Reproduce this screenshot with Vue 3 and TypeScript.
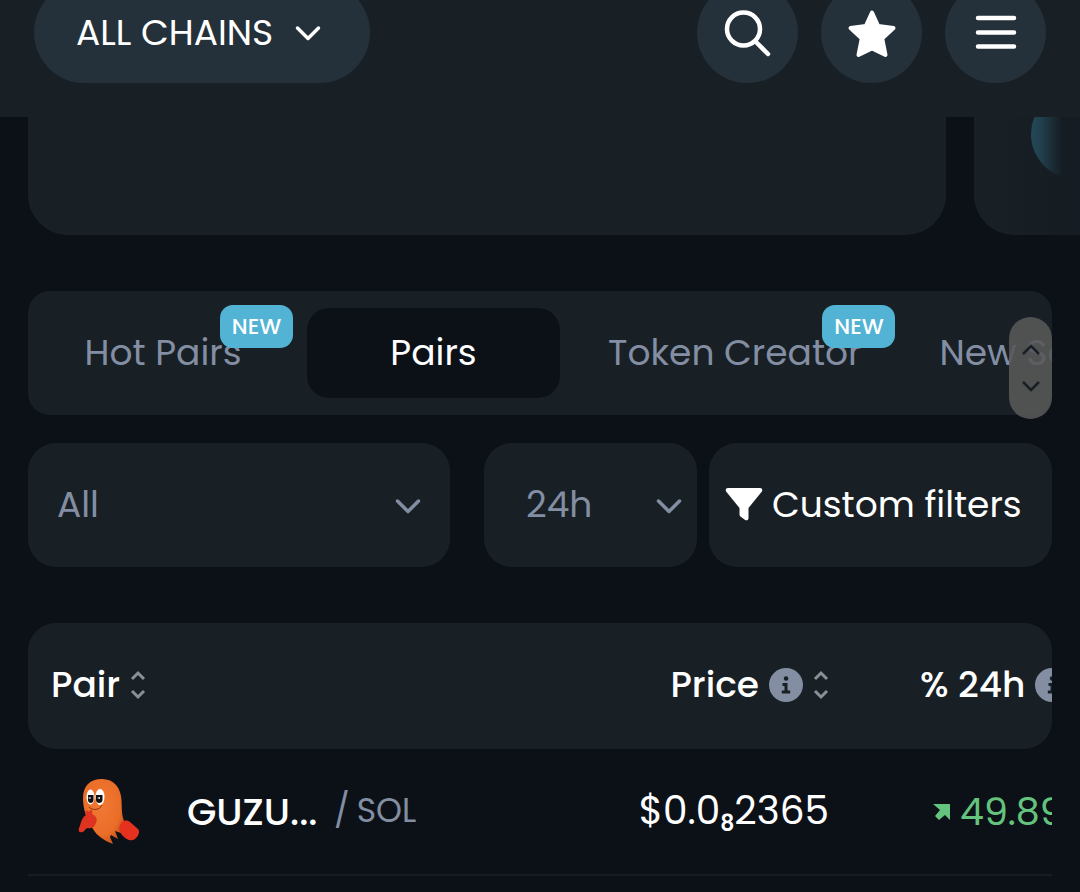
<script setup lang="ts">
import { ref } from 'vue'

interface Tab {
  id: string
  label: string
  isNew: boolean
}

const tabs: Tab[] = [
  { id: 'hot', label: 'Hot Pairs', isNew: true },
  { id: 'pairs', label: 'Pairs', isNew: false },
  { id: 'creator', label: 'Token Creator', isNew: true },
  { id: 'socials', label: 'New Socials', isNew: false },
]

const activeTab = ref('pairs')
const category = ref('All')
const period = ref('24h')
</script>

<template>
  <div class="page">
    <header class="topbar">
      <button class="chains" type="button">
        <span>ALL CHAINS</span>
        <svg class="chevron" viewBox="0 0 28 18" aria-hidden="true"><path d="M3.500 4 14 14.500 24.500 4" /></svg>
      </button>
      <nav class="actions">
        <button class="round" type="button" aria-label="Search">
          <svg viewBox="0 0 50 50" fill="none" stroke="currentColor" stroke-width="4.500" stroke-linecap="round" aria-hidden="true">
            <circle cx="20.500" cy="21" r="16.500" />
            <path d="m33 34 12 12" />
          </svg>
        </button>
        <button class="round" type="button" aria-label="Favourites">
          <svg viewBox="0 0 50 50" fill="currentColor" stroke="currentColor" stroke-width="4" stroke-linejoin="round" aria-hidden="true">
            <path d="m25 4.500 6.200 13.500 15.300 2-11.300 10.500 3.300 16.500L25 40.500 11.500 47l3.300-16.500L3.500 20l15.300-2Z" />
          </svg>
        </button>
        <button class="round" type="button" aria-label="Menu">
          <svg viewBox="0 0 50 50" fill="none" stroke="currentColor" stroke-width="4.500" stroke-linecap="round" aria-hidden="true">
            <path d="M7 10h36M7 24.500h36M7 38.500h36" />
          </svg>
        </button>
      </nav>
    </header>

    <main>
      <section class="carousel" aria-label="Highlights">
        <div class="slide"></div>
        <div class="slide next"><span class="orb"></span></div>
      </section>

      <div class="tabs-wrap">
        <div class="tabs" role="tablist">
          <button
            v-for="tab in tabs"
            :key="tab.id"
            type="button"
            role="tab"
            :class="['tab', tab.id, { active: activeTab === tab.id }]"
            :aria-selected="activeTab === tab.id"
            @click="activeTab = tab.id"
          >
            {{ tab.label }}
            <span v-if="tab.isNew" class="badge">NEW</span>
          </button>
        </div>
        <div class="scroller" aria-hidden="true">
          <svg viewBox="0 0 20 12"><path d="m2 10 8-8 8 8" /></svg>
          <svg viewBox="0 0 20 12"><path d="m2 2 8 8 8-8" /></svg>
        </div>
      </div>

      <form class="filters" @submit.prevent>
        <label class="field wide">
          <select v-model="category" aria-label="Category">
            <option>All</option>
          </select>
          <svg class="chevron" viewBox="0 0 28 18" aria-hidden="true"><path d="M3.500 4 14 14.500 24.500 4" /></svg>
        </label>
        <div class="filter-pair">
          <label class="field period">
            <select v-model="period" aria-label="Period">
              <option>24h</option>
            </select>
            <svg class="chevron" viewBox="0 0 28 18" aria-hidden="true"><path d="M3.500 4 14 14.500 24.500 4" /></svg>
          </label>
          <button class="custom" type="button">
            <svg viewBox="0 0 38 34" aria-hidden="true">
              <path d="M3 0h32c2 0 3 2 1.700 3.800L23.500 20v10c0 2.200-2 3-3.700 1.700l-4-3c-.9-.7-1.300-1.400-1.300-2.500V20L1.300 3.800C0 2 1 0 3 0Z" fill="currentColor" />
            </svg>
            <span>Custom filters</span>
          </button>
        </div>
      </form>

      <table>
        <colgroup>
          <col />
          <col class="col-price" />
          <col class="col-change" />
        </colgroup>
        <thead>
          <tr>
            <th class="pair" scope="col">
              <button class="sort" type="button">
                Pair
                <svg class="arrows" viewBox="0 0 16 30" aria-hidden="true"><path d="m2 9 6-6 6 6M2 21l6 6 6-6" /></svg>
              </button>
            </th>
            <th class="price" scope="col">
              <button class="sort" type="button">
                Price
                <svg class="info" viewBox="0 0 34 34" aria-hidden="true">
                  <circle cx="17" cy="17" r="17" fill="#838ea3" />
                  <path d="M17 10.500h.1" stroke="#182026" stroke-width="4.500" stroke-linecap="round" />
                  <path d="M13.500 16.500H17v7M12.800 24h8.400" fill="none" stroke="#182026" stroke-width="3" />
                </svg>
                <svg class="arrows" viewBox="0 0 16 30" aria-hidden="true"><path d="m2 9 6-6 6 6M2 21l6 6 6-6" /></svg>
              </button>
            </th>
            <th class="change" scope="col">
              <button class="sort" type="button">
                % 24h
                <svg class="info" viewBox="0 0 34 34" aria-hidden="true">
                  <circle cx="17" cy="17" r="17" fill="#838ea3" />
                  <path d="M17 10.500h.1" stroke="#182026" stroke-width="4.500" stroke-linecap="round" />
                  <path d="M13.500 16.500H17v7M12.800 24h8.400" fill="none" stroke="#182026" stroke-width="3" />
                </svg>
              </button>
            </th>
          </tr>
        </thead>
        <tbody>
          <tr>
            <td class="pair">
              <a class="token" href="#">
                <svg class="ghost" viewBox="2 5 64 70" aria-hidden="true">
                  <defs>
                    <radialGradient id="ghost-body" cx=".45" cy=".4" r=".65">
                      <stop offset="0" stop-color="#f07a34" />
                      <stop offset=".7" stop-color="#ea6d28" />
                      <stop offset="1" stop-color="#c9541c" />
                    </radialGradient>
                  </defs>
                  <path d="M8 26C8 14 15 7 27 7c12 0 19 9 19.500 21 .4 8 0 14 2.500 21-2 3-3 6-3 12l-6-2 3 8-7-4-1 2 3 7C30 69 22 64 18 57 11 47 8 36 8 26Z" fill="url(#ghost-body)" />
                  <path d="M46 51c2-3 6-3 9-1l8 7c3 3-1 10-5 11-4 1-7-1-10-4-4-4-5-9-2-13Z" fill="#e6311f" />
                  <ellipse cx="15.500" cy="25" rx="4" ry="7.500" fill="#fff" />
                  <ellipse cx="25" cy="25" rx="4.500" ry="8" fill="#fff" />
                  <path d="M13 23h5.500v5c0 4-5.500 4-5.500 0ZM21 23h6.500v5c0 4-6.500 4-6.500 0Z" fill="#111" />
                  <path d="m13 26 2.500-1v2ZM22 26l3-1v2Z" fill="#fff" />
                  <path d="M14 35c4 4 11 3 13-2" fill="none" stroke="#8d3212" />
                  <path d="M11 43c-2-4 1-6 3-3 2-4 4-2 3 2 4 2 6 5 4 9-2 5-6 6-9 5l-4 4c-4 1-5-1-4-4 2-4 2-10 7-13Z" fill="#dd3320" />
                </svg>
                <span class="symbol">GUZU...</span>
                <span class="slash">/</span>
                <span class="quote">SOL</span>
              </a>
            </td>
            <td class="price">$0.0<sub>8</sub>2365</td>
            <td class="change">
              <span class="gain">
                <svg viewBox="0 0 18 18" aria-hidden="true"><path d="M0 1h17v16l-5-5-6 5-4-4 5-6Z" fill="currentColor" /></svg>
                49.89%
              </span>
            </td>
          </tr>
        </tbody>
      </table>
    </main>
  </div>
</template>

<style>
body {
  margin: 0;
  background: #0c1118;
}
</style>

<style scoped>
.page {
  overflow: hidden;
  padding-bottom: 15px;
  background: #0c1118;
  color: #fff;
  font-family: Poppins, Inter, "Noto Sans", sans-serif;
  font-size: 36px;
  line-height: 44px;
}
*,
*::before,
*::after {
  box-sizing: border-box;
}
button,
select {
  margin: 0;
  border: 0;
  padding: 0;
  background: none;
  color: inherit;
  font: inherit;
  cursor: pointer;
}
svg {
  display: block;
  flex: none;
}
.topbar {
  display: flex;
  justify-content: space-between;
  margin-top: -18px;
  padding: 0 34px 34px;
  background: #182026;
}
.chains {
  display: flex;
  align-items: center;
  justify-content: space-between;
  width: 336px;
  height: 101px;
  border-radius: 51px;
  padding: 0 48px 0 42px;
  background: #25313a;
}
.chevron {
  width: 28px;
  height: 18px;
  fill: none;
  stroke: currentColor;
  stroke-width: 3.500;
  stroke-linecap: round;
  stroke-linejoin: round;
}
.actions {
  display: flex;
  gap: 23px;
}
.round {
  display: grid;
  place-items: center;
  width: 101px;
  height: 101px;
  border-radius: 50%;
  background: #25313a;
}
.round svg {
  width: 50px;
  height: 50px;
}
main {
  padding: 0 28px;
}
.carousel {
  position: relative;
  display: flex;
  gap: 28px;
  height: 118px;
  margin-right: -28px;
  overflow: hidden;
}
.carousel::after {
  content: "";
  position: absolute;
  inset: 0 0 0 auto;
  width: 120px;
  background: linear-gradient(90deg, transparent 30%, rgb(12 17 24 / 30%));
}
.slide {
  flex: 1;
  border-radius: 0 0 40px 40px;
  background: #182026;
}
.slide.next {
  position: relative;
  flex: 0 0 106px;
  border-radius: 0 0 0 40px;
}
.orb {
  position: absolute;
  top: -28px;
  left: 57px;
  width: 90px;
  height: 90px;
  border-radius: 50%;
  background: linear-gradient(90deg, #295060, #244855 12%, transparent 35%);
}
.tabs-wrap {
  position: relative;
  margin-top: 56px;
}
.tabs {
  display: flex;
  gap: 26px;
  overflow: hidden;
  height: 124px;
  border-radius: 22px;
  padding: 17px;
  background: #182026;
}
.tab {
  position: relative;
  flex: none;
  height: 90px;
  border-radius: 22px;
  padding: 0 30px;
  color: #838ea3;
  white-space: nowrap;
}
.tab.active {
  background: #0c1118;
  color: #fff;
}
.hot {
  min-width: 236px;
}
.pairs {
  min-width: 253px;
}
.creator {
  padding: 0 22px;
}
.badge {
  position: absolute;
  top: -3px;
  right: -12px;
  width: 73px;
  border-radius: 13px;
  background: #52b3d4;
  color: #fff;
  font-size: 22px;
  font-weight: 500;
  line-height: 43px;
  text-align: center;
}
.scroller {
  position: absolute;
  top: 26px;
  right: 0;
  display: flex;
  flex-direction: column;
  align-items: center;
  justify-content: center;
  gap: 24px;
  width: 43px;
  height: 102px;
  border-radius: 22px;
  background: rgb(88 88 88 / 88%);
}
.scroller svg {
  width: 20px;
  height: 12px;
  fill: none;
  stroke: #182026;
  stroke-width: 2.500;
}
.filters {
  display: grid;
  grid-template-columns: 422fr 568fr;
  gap: 34px;
  margin-top: 28px;
}
.filter-pair {
  display: grid;
  grid-template-columns: 213fr 343fr;
  gap: 12px;
}
.field {
  position: relative;
  display: block;
  color: #838ea3;
}
.field select {
  appearance: none;
  display: block;
  width: 100%;
  height: 124px;
  border-radius: 28px;
  padding: 0 29px;
  background: #182026;
}
.period select {
  padding-left: 42px;
}
.field .chevron {
  position: absolute;
  top: 54px;
  right: 28px;
  pointer-events: none;
}
.period .chevron {
  right: 14px;
}
.custom {
  display: flex;
  align-items: center;
  gap: 9px;
  height: 124px;
  border-radius: 28px;
  padding: 0 16px;
  background: #182026;
  white-space: nowrap;
}
.custom svg {
  width: 38px;
  height: 34px;
}
table {
  width: 100%;
  margin-top: 56px;
  border-spacing: 0;
  table-layout: fixed;
}
.col-price {
  width: 270px;
}
.col-change {
  width: 211px;
}
th,
td {
  overflow: hidden;
  padding: 0;
  white-space: nowrap;
  text-align: left;
}
th {
  height: 126px;
  padding-bottom: 4px;
  background: #182026;
  font-weight: 500;
}
td {
  height: 127px;
  border-bottom: 2px solid #161c23;
  font-size: 38px;
}
th:first-child {
  border-radius: 28px 0 0 28px;
}
th:last-child {
  border-radius: 0 28px 28px 0;
}
th.pair {
  padding-left: 23px;
}
th.price,
td.price {
  padding-right: 12px;
  text-align: right;
}
td.price {
  padding-bottom: 2px;
  font-size: 39px;
}
th.change {
  padding-left: 79px;
}
td.change {
  padding-left: 92px;
}
.sort {
  display: inline-flex;
  align-items: center;
  gap: 10px;
  vertical-align: middle;
}
.arrows {
  width: 16px;
  height: 30px;
  fill: none;
  stroke: #8b9094;
  stroke-width: 3;
}
.info {
  width: 34px;
  height: 34px;
}
.token {
  display: flex;
  align-items: center;
  padding-left: 49px;
  color: #fff;
  text-decoration: none;
}
.ghost {
  width: 64px;
  height: 70px;
}
.symbol {
  width: 147px;
  margin-left: 46px;
  font-weight: 500;
}
.slash,
.quote {
  padding-bottom: 2px;
  color: #838ea3;
  font-size: 33px;
}
.quote {
  margin-left: 7px;
}
sub {
  font-size: 22px;
  font-weight: 600;
  line-height: 0;
  vertical-align: -7px;
}
.gain {
  display: flex;
  align-items: center;
  gap: 9px;
  color: #64c37d;
}
.gain svg {
  width: 18px;
  height: 18px;
}
</style>
